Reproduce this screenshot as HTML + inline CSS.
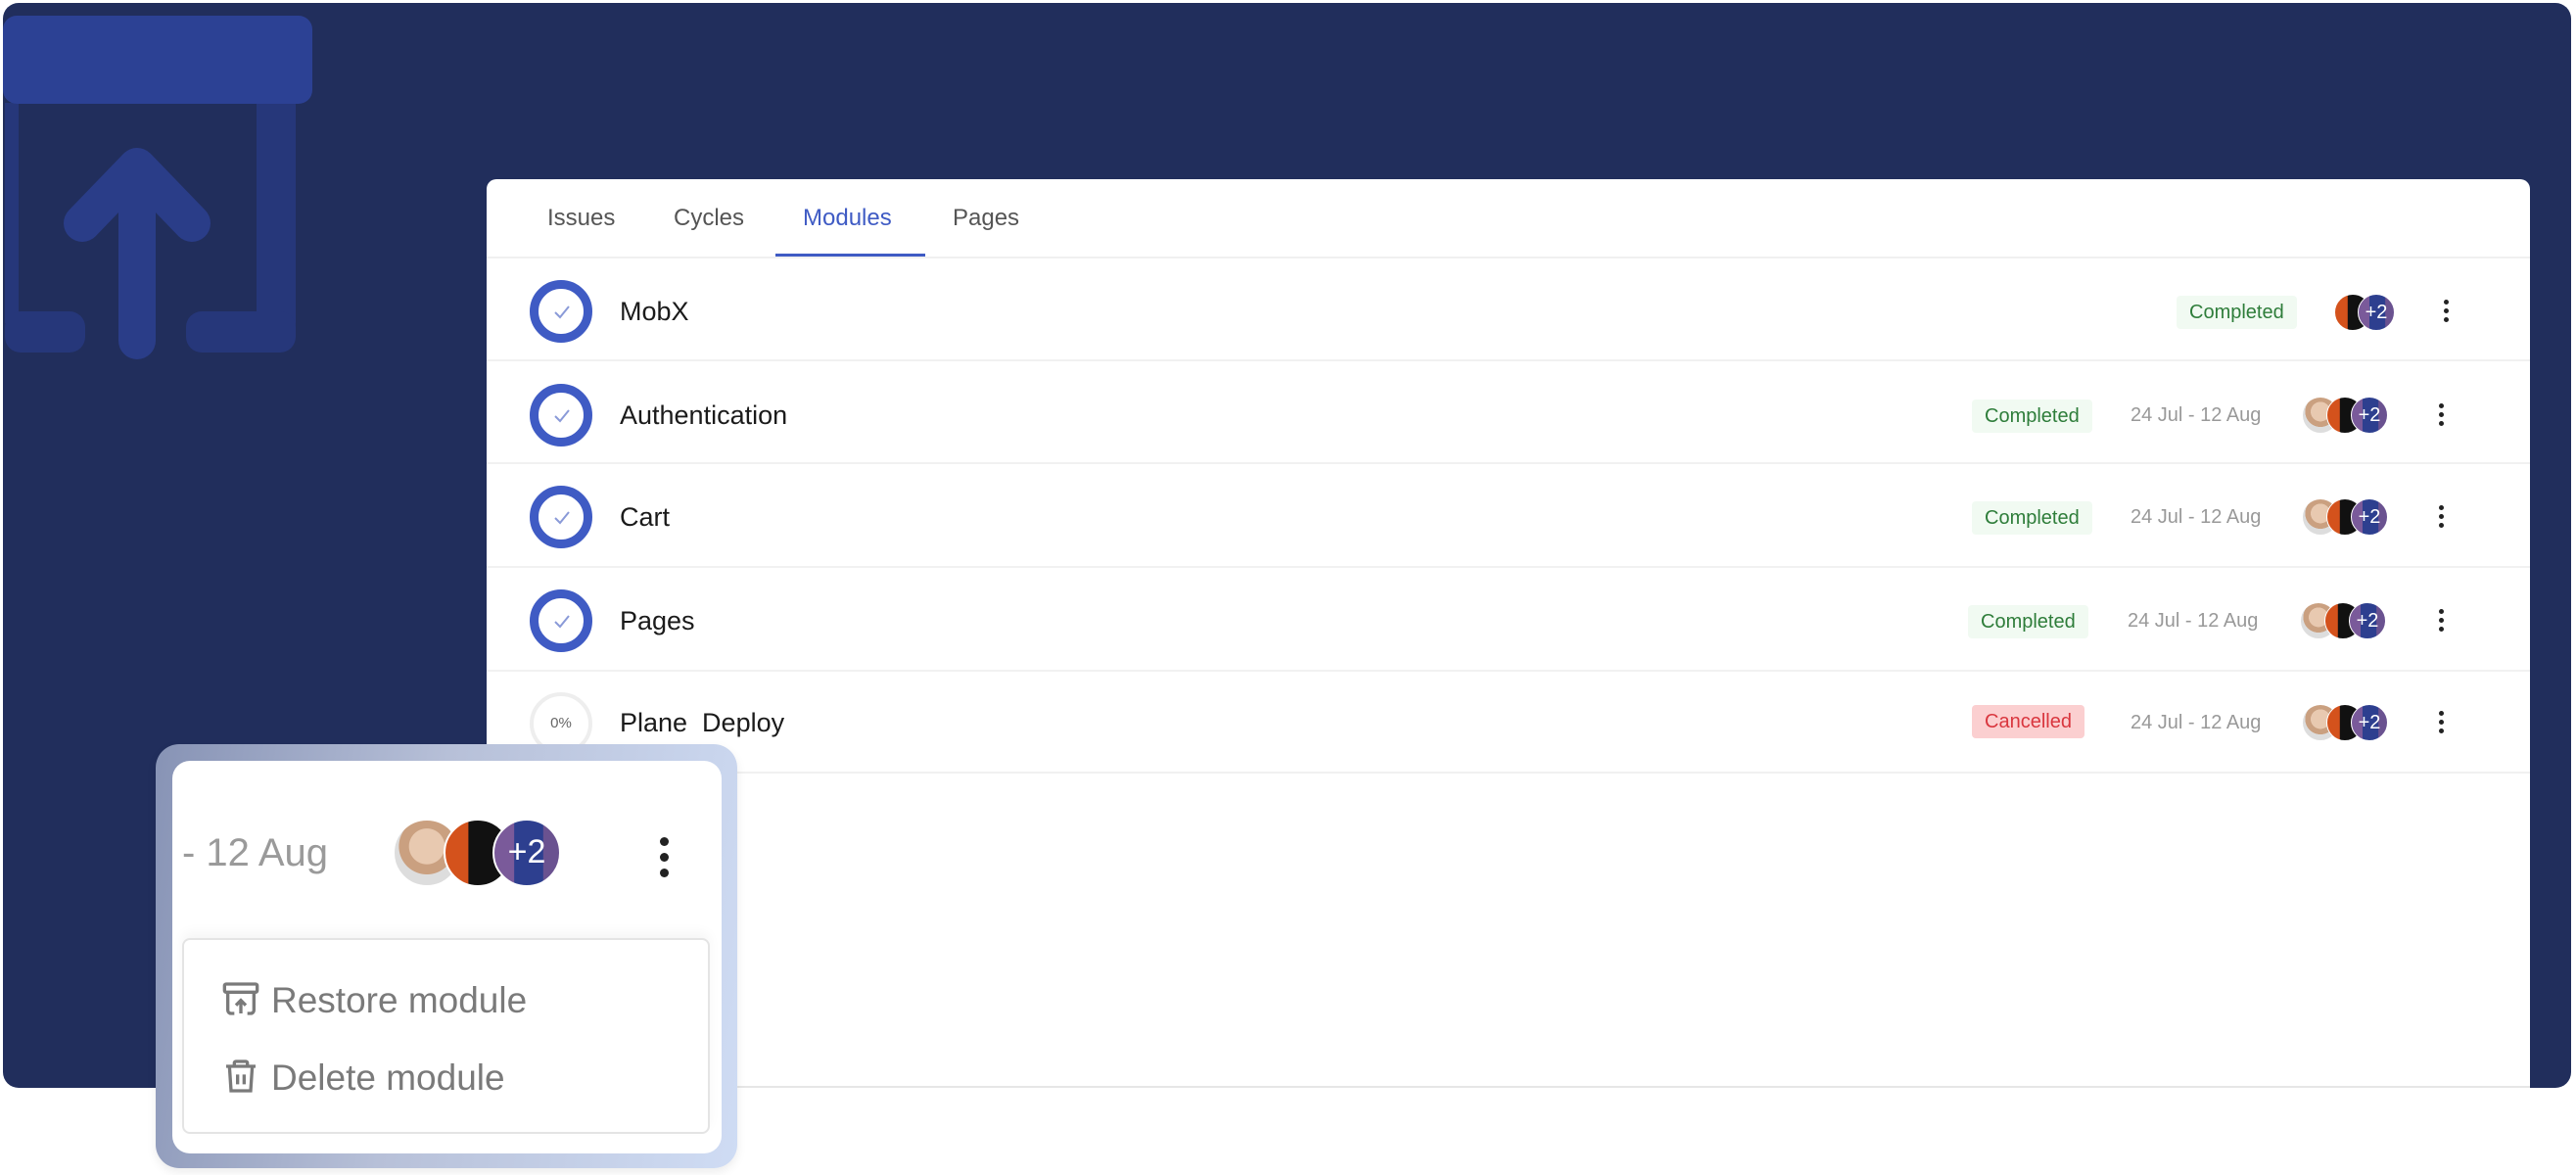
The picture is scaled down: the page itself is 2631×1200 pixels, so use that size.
<!DOCTYPE html>
<html><head><meta charset="utf-8"><style>
*{margin:0;padding:0;box-sizing:border-box}
body{width:2631px;height:1200px;background:#fff;position:relative;overflow:hidden;font-family:"Liberation Sans",sans-serif}
.bg{position:absolute;left:3px;top:3px;width:2623px;height:1108px;background:#212e5c;border-radius:16px;overflow:hidden}
.card{position:absolute;left:497px;top:183px;width:2087px;height:928px;background:#fff;border-radius:10px 10px 0 0;border-bottom:2px solid #e6e6e6}
.tab{position:absolute;top:209px;font-size:24px;color:#555}
.row{position:absolute;left:497px;width:2087px;height:105px;border-bottom:2px solid #f1f1f1}
.ic{position:absolute;left:541px;width:64px;height:64px;border-radius:50%;border:9px solid #3f5bc4;background:#fff}
.ic svg{position:absolute;left:14px;top:14px}
.name{position:absolute;left:633px;font-size:27px;color:#1b1b1b}
.badge{position:absolute;height:34px;line-height:34px;font-size:20px;padding:0 13px;border-radius:4px;background:#f1faf2;color:#2e7d3a}
.date{position:absolute;font-size:20px;color:#999}
.av{position:absolute;width:38px;height:38px;border-radius:50%;border:1px solid #fff}
.a1{background:radial-gradient(circle at 50% 40%,#e8c9b0 0 35%,#caa080 36% 55%,#ddd 56%)}
.a2{background:linear-gradient(90deg,#d4521c 0 35%,#111 36%)}
.a3{background:linear-gradient(90deg,#7a5a9a 0 30%,#2d3f8f 31% 75%,#6a5290 76%);color:#fff;font-size:20px;text-align:center;line-height:36px}
.dots{position:absolute;width:6px}
.dots i{display:block;width:5px;height:5px;border-radius:50%;background:#222;margin-bottom:4px}
</style></head><body>
<div class="bg">
<svg width="330" height="370" style="position:absolute;left:-3px;top:-3px">
<path d="M12 105 V330" stroke="#26377a" stroke-width="14" fill="none"/>
<path d="M282 105 V330" stroke="#26377a" stroke-width="40" fill="none" stroke-linecap="round"/>
<rect x="5" y="318" width="82" height="42" rx="16" fill="#26377a"/>
<rect x="190" y="318" width="112" height="42" rx="16" fill="#26377a"/>
<path d="M140 348 V172 M84 228 L140 170 L196 228" stroke="#2a3d88" stroke-width="38" fill="none" stroke-linecap="round" stroke-linejoin="round"/>
<rect x="3" y="16" width="316" height="90" rx="14" fill="#2c4194"/>
</svg>
</div>
<div class="card"></div>
<div style="position:absolute;left:497px;top:262px;width:2087px;height:2px;background:#f0f0f0"></div>
<div class="tab" style="left:559px">Issues</div>
<div class="tab" style="left:688px">Cycles</div>
<div class="tab" style="left:820px;color:#3f5bc4">Modules</div>
<div class="tab" style="left:973px">Pages</div>
<div style="position:absolute;left:792px;top:259px;width:153px;height:3px;background:#3f5bc4"></div>

<div class="row" style="top:264px"></div>
<div class="row" style="top:369px"></div>
<div class="row" style="top:475px"></div>
<div class="row" style="top:581px"></div>
<div class="row" style="top:685px"></div>

<div class="ic" style="top:286px"><svg width="20" height="20" viewBox="0 0 20 20"><path d="M3 10 L8 15 L17 4" stroke="#8a9ad8" stroke-width="2" fill="none"/></svg></div>
<div class="ic" style="top:392px"><svg width="20" height="20" viewBox="0 0 20 20"><path d="M3 10 L8 15 L17 4" stroke="#8a9ad8" stroke-width="2" fill="none"/></svg></div>
<div class="ic" style="top:496px"><svg width="20" height="20" viewBox="0 0 20 20"><path d="M3 10 L8 15 L17 4" stroke="#8a9ad8" stroke-width="2" fill="none"/></svg></div>
<div class="ic" style="top:602px"><svg width="20" height="20" viewBox="0 0 20 20"><path d="M3 10 L8 15 L17 4" stroke="#8a9ad8" stroke-width="2" fill="none"/></svg></div>
<div style="position:absolute;left:541px;top:707px;width:64px;height:64px;border-radius:50%;border:4px solid #eee;font-size:15px;color:#666;text-align:center;line-height:56px">0%</div>

<div class="name" style="top:303px">MobX</div>
<div class="name" style="top:409px">Authentication</div>
<div class="name" style="top:513px">Cart</div>
<div class="name" style="top:619px">Pages</div>
<div class="name" style="top:723px">Plane&nbsp; Deploy</div>

<div class="badge" style="left:2223px;top:302px">Completed</div>
<div class="badge" style="left:2014px;top:408px">Completed</div>
<div class="badge" style="left:2014px;top:512px">Completed</div>
<div class="badge" style="left:2010px;top:618px">Completed</div>
<div class="badge" style="left:2014px;top:720px;background:#fbcfd0;color:#d9363e">Cancelled</div>

<div class="date" style="left:2176px;top:413px">24 Jul - 12 Aug</div>
<div class="date" style="left:2176px;top:517px">24 Jul - 12 Aug</div>
<div class="date" style="left:2173px;top:623px">24 Jul - 12 Aug</div>
<div class="date" style="left:2176px;top:727px">24 Jul - 12 Aug</div>

<div class="av a2" style="left:2384px;top:300px"></div><div class="av a3" style="left:2408px;top:300px">+2</div>
<div class="av a1" style="left:2351px;top:405px"></div><div class="av a2" style="left:2376px;top:405px"></div><div class="av a3" style="left:2401px;top:405px">+2</div>
<div class="av a1" style="left:2351px;top:509px"></div><div class="av a2" style="left:2376px;top:509px"></div><div class="av a3" style="left:2401px;top:509px">+2</div>
<div class="av a1" style="left:2349px;top:615px"></div><div class="av a2" style="left:2374px;top:615px"></div><div class="av a3" style="left:2399px;top:615px">+2</div>
<div class="av a1" style="left:2351px;top:719px"></div><div class="av a2" style="left:2376px;top:719px"></div><div class="av a3" style="left:2401px;top:719px">+2</div>

<div class="dots" style="left:2496px;top:306px"><i></i><i></i><i></i></div>
<div class="dots" style="left:2491px;top:412px"><i></i><i></i><i></i></div>
<div class="dots" style="left:2491px;top:516px"><i></i><i></i><i></i></div>
<div class="dots" style="left:2491px;top:622px"><i></i><i></i><i></i></div>
<div class="dots" style="left:2491px;top:726px"><i></i><i></i><i></i></div>

<div style="position:absolute;left:159px;top:760px;width:594px;height:433px;border-radius:24px;background:linear-gradient(100deg,#8793b5 0%,#b7c0d8 45%,#cfdcf4 100%);box-shadow:0 4px 10px rgba(0,0,0,.08)"></div>
<div style="position:absolute;left:176px;top:777px;width:561px;height:401px;border-radius:18px;background:#fff"></div>
<div style="position:absolute;left:186px;top:849px;font-size:40px;color:#9a9a9a">- 12 Aug</div>
<div class="av a1" style="left:401px;top:836px;width:70px;height:70px;border-width:2px"></div>
<div class="av a2" style="left:453px;top:836px;width:70px;height:70px;border-width:2px"></div>
<div class="av a3" style="left:503px;top:836px;width:70px;height:70px;border-width:2px;font-size:34px;line-height:64px">+2</div>
<div style="position:absolute;left:674px;top:855px"><i style="display:block;width:9px;height:9px;border-radius:50%;background:#222;margin-bottom:7px"></i><i style="display:block;width:9px;height:9px;border-radius:50%;background:#222;margin-bottom:7px"></i><i style="display:block;width:9px;height:9px;border-radius:50%;background:#222"></i></div>
<div style="position:absolute;left:186px;top:958px;width:539px;height:200px;border:2px solid #e4e4e4;border-radius:8px;background:#fff;box-shadow:0 -6px 12px rgba(0,0,0,.04)"></div>
<svg width="40" height="40" viewBox="0 0 24 24" style="position:absolute;left:226px;top:1000px" fill="none" stroke="#7a7a7a" stroke-width="2"><rect x="2" y="3" width="20" height="5" rx="1"/><path d="M4 8v11a2 2 0 0 0 2 2h2M20 8v11a2 2 0 0 1-2 2h-2M12 21v-8M9 16l3-3 3 3"/></svg>
<div style="position:absolute;left:277px;top:1001px;font-size:37px;color:#7a7a7a">Restore module</div>
<svg width="40" height="40" viewBox="0 0 24 24" style="position:absolute;left:226px;top:1079px" fill="none" stroke="#7a7a7a" stroke-width="2"><path d="M3 6h18M8 6V4a1 1 0 0 1 1-1h6a1 1 0 0 1 1 1v2M5 6l1 15h12l1-15M10 11v6M14 11v6"/></svg>
<div style="position:absolute;left:277px;top:1080px;font-size:37px;color:#7a7a7a">Delete module</div>
</body></html>
